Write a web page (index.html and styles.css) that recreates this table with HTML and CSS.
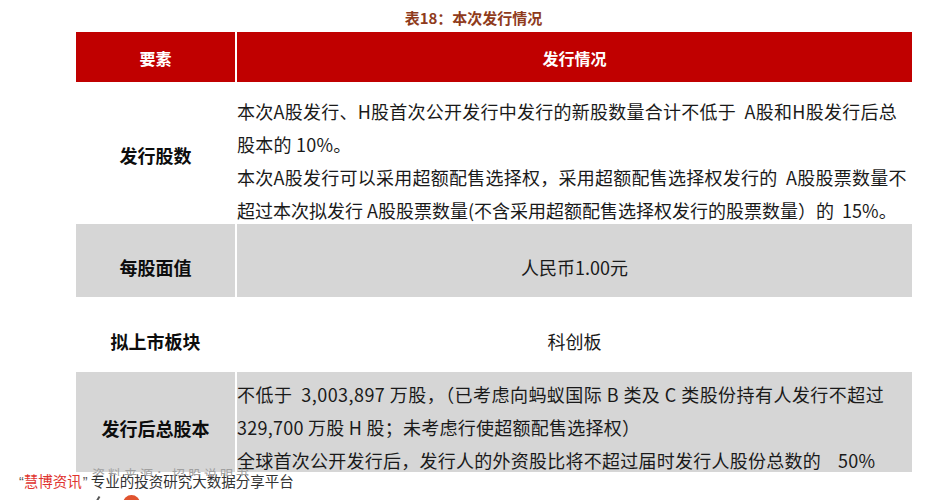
FILE: index.html
```html
<!DOCTYPE html>
<html lang="zh-CN">
<head>
<meta charset="utf-8">
<title>表18：本次发行情况</title>
<link rel="stylesheet" href="styles.css">
</head>
<body>
<div class="page">
  <div class="caption">表18：本次发行情况</div>
  <div class="table-wrap">
    <div class="table">
      <div class="cell head">要素</div>
      <div class="cell head">发行情况</div>

      <div class="cell label r1">发行股数</div>
      <div class="cell text r1">
        <div class="line">本次A股发行、H股首次公开发行中发行的新股数量合计不低于  A股和H股发行后总</div>
        <div class="line">股本的 10%。</div>
        <div class="line">本次A股发行可以采用超额配售选择权，采用超额配售选择权发行的  A股股票数量不</div>
        <div class="line tight">超过本次拟发行 A股股票数量(不含采用超额配售选择权发行的股票数量）的  15%。</div>
      </div>

      <div class="cell label gray r2">每股面值</div>
      <div class="cell center gray r2">人民币1.00元</div>

      <div class="cell label r3">拟上市板块</div>
      <div class="cell center r3">科创板</div>

      <div class="cell label gray r4">发行后总股本</div>
      <div class="cell text gray r4">
        <div class="line wide">不低于  3,003,897 万股，（已考虑向蚂蚁国际 B 类及 C 类股份持有人发行不超过</div>
        <div class="line">329,700 万股 H 股；未考虑行使超额配售选择权）</div>
        <div class="line">全球首次公开发行后，发行人的外资股比将不超过届时发行人股份总数的    50%</div>
        <div class="line">。</div>
      </div>
    </div>
  </div>
  <div class="footer">
    <span class="ghost">资料来源：招股说明书</span>
    <span class="q">“</span><span class="brand">慧博资讯</span><span class="q">”</span><span class="slogan">专业的投资研究大数据分享平台</span>
    <span class="mark"></span>
    <span class="dot"></span>
  </div>
</div>
</body>
</html>
```

FILE: styles.css
```css
html, body {
  margin: 0;
  padding: 0;
  background: #ffffff;
  overflow: hidden;
}
body {
  width: 947px;
  height: 500px;
  font-family: "Noto Sans CJK SC", "Noto Sans", sans-serif;
  color: #1a1a1a;
}
.page {
  position: relative;
  width: 947px;
  height: 500px;
}
.caption {
  height: 32px;
  box-sizing: border-box;
  padding-top: 6px;
  text-align: center;
  font-size: 15px;
  line-height: 24px;
  font-weight: 700;
  color: #8f3b1c;
}
.table-wrap {
  height: 440px;
  overflow: hidden;
  margin-left: 76px;
  width: 836px;
}
.table {
  display: grid;
  grid-template-columns: 159px 675px;
  column-gap: 2px;
}
.cell {
  box-sizing: border-box;
  display: flex;
  align-items: center;
}
.head {
  height: 50px;
  background: #c00000;
  color: #ffffff;
  font-weight: 700;
  font-size: 16px;
  justify-content: center;
  padding-top: 2px;
}
.gray {
  background: #d6d6d6;
}
.label {
  justify-content: center;
  font-weight: 700;
  font-size: 18px;
  color: #0d0d0d;
}
.center {
  justify-content: center;
  font-size: 18px;
}
.text {
  flex-direction: column;
  align-items: flex-start;
  justify-content: flex-start;
  font-size: 18px;
  letter-spacing: 0.25px;
  overflow: hidden;
}
.line {
  white-space: pre;
  line-height: 33px;
  height: 33px;
}
.line.wide {
  letter-spacing: 0.45px;
}
.line.tight {
  letter-spacing: 0;
}
.r1 { height: 142px; }
.r1.text { padding-top: 13px; }
.r1.label { padding-top: 4px; }
.r2 { height: 73px; padding-top: 13px; }
.r3 { height: 75px; padding-top: 13px; }
.r4 { height: 112px; }
.r4.text { padding-top: 6px; height: 140px; }
.footer {
  position: relative;
  height: 28px;
  padding-left: 19px;
  font-size: 14.5px;
  line-height: 18px;
  color: #333333;
}
.q {
  font-family: "Liberation Sans", sans-serif;
  color: #555555;
}
.brand { color: #e0342f; margin-right: 1px; }
.slogan { color: #333333; margin-left: 3px; }
.ghost {
  position: absolute;
  left: 92px;
  top: -5px;
  font-size: 13px;
  letter-spacing: 3px;
  color: #a0a0a0;
  line-height: 14px;
  height: 9px;
  overflow: hidden;
}
.mark {
  position: absolute;
  left: 97px;
  top: 24px;
  width: 2px;
  height: 6px;
  background: #555555;
  transform: rotate(30deg);
}
.dot {
  position: absolute;
  left: 123px;
  top: 23px;
  width: 17px;
  height: 17px;
  border-radius: 50%;
  background: #e0532f;
}
```
